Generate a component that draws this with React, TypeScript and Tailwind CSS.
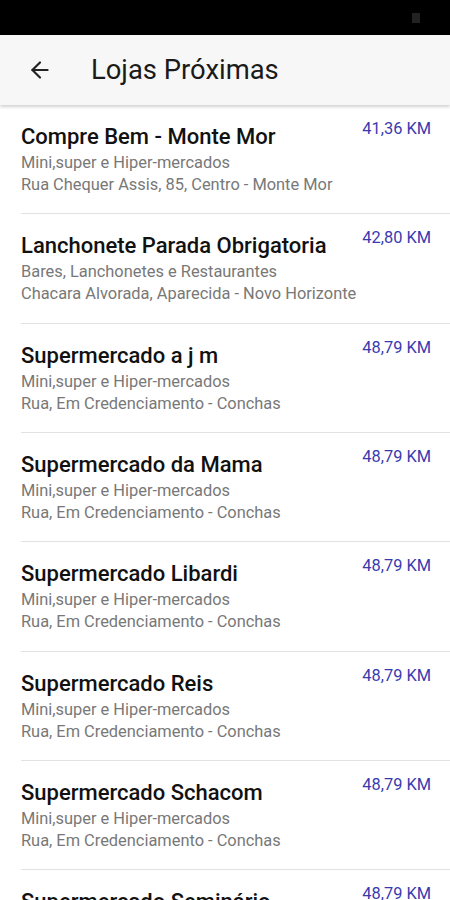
import { ArrowLeft } from "lucide-react";

interface Loja {
    nome: string;
    categoria: string;
    endereco: string;
    distancia: string;
}

const lojas: Loja[] = [
    {
        nome: "Compre Bem - Monte Mor",
        categoria: "Mini,super e Hiper-mercados",
        endereco: "Rua Chequer Assis, 85, Centro - Monte Mor",
        distancia: "41,36 KM",
    },
    {
        nome: "Lanchonete Parada Obrigatoria",
        categoria: "Bares, Lanchonetes e Restaurantes",
        endereco: "Chacara Alvorada, Aparecida - Novo Horizonte",
        distancia: "42,80 KM",
    },
    {
        nome: "Supermercado a j m",
        categoria: "Mini,super e Hiper-mercados",
        endereco: "Rua, Em Credenciamento - Conchas",
        distancia: "48,79 KM",
    },
    {
        nome: "Supermercado da Mama",
        categoria: "Mini,super e Hiper-mercados",
        endereco: "Rua, Em Credenciamento - Conchas",
        distancia: "48,79 KM",
    },
    {
        nome: "Supermercado Libardi",
        categoria: "Mini,super e Hiper-mercados",
        endereco: "Rua, Em Credenciamento - Conchas",
        distancia: "48,79 KM",
    },
    {
        nome: "Supermercado Reis",
        categoria: "Mini,super e Hiper-mercados",
        endereco: "Rua, Em Credenciamento - Conchas",
        distancia: "48,79 KM",
    },
    {
        nome: "Supermercado Schacom",
        categoria: "Mini,super e Hiper-mercados",
        endereco: "Rua, Em Credenciamento - Conchas",
        distancia: "48,79 KM",
    },
    {
        nome: "Supermercado Seminário",
        categoria: "Mini,super e Hiper-mercados",
        endereco: "Rua, Em Credenciamento - Conchas",
        distancia: "48,79 KM",
    },
];

const LojaItem = ({ loja, first }: { loja: Loja; first: boolean }) => {
    return (
        <div className="pl-[21px] shrink-0">
            <div
                className={`flex justify-between pr-[19px] pt-[19px] pb-[17.33px] ${
                    first ? "" : "border-t border-[#e2e2e2]"
                }`}
            >
                <div className="flex flex-col min-w-0">
                    <p className="text-[22px] leading-[26px] font-medium text-[#111] whitespace-nowrap">
                        {loja.nome}
                    </p>
                    <p className="mt-[2px] text-[16.4px] leading-[22px] text-[#787878] whitespace-nowrap">
                        {loja.categoria}
                    </p>
                    <p className="text-[16.4px] leading-[22px] text-[#787878] whitespace-nowrap">
                        {loja.endereco}
                    </p>
                </div>
                <p className="-mt-[6px] text-[16.4px] leading-[22px] text-[#3a3ab0] whitespace-nowrap">
                    {loja.distancia}
                </p>
            </div>
        </div>
    );
};

export default function App() {
    return (
        <div
            className="w-[450px] h-[900px] overflow-hidden bg-white flex flex-col"
            style={{ fontFamily: "Roboto, 'Noto Sans', sans-serif" }}
        >
            <div className="h-[35px] bg-black flex justify-end items-center pr-[30px] shrink-0">
                <div className="w-[8px] h-[10px] bg-[#222]" />
            </div>
            <div className="h-[70px] bg-[#f7f7f7] flex items-center shadow-[0_2px_3px_rgba(0,0,0,0.18)] relative z-10 shrink-0">
                <ArrowLeft className="ml-[27px] w-[26px] h-[26px] text-[#222]" strokeWidth={2} />
                <h1 className="ml-[38px] text-[27.4px] leading-8 text-[#1a1a1a]">Lojas Próximas</h1>
            </div>
            <div className="flex flex-col">
                {lojas.map((loja, index) => (
                    <LojaItem key={`loja-${index}`} loja={loja} first={index === 0} />
                ))}
            </div>
        </div>
    );
}
